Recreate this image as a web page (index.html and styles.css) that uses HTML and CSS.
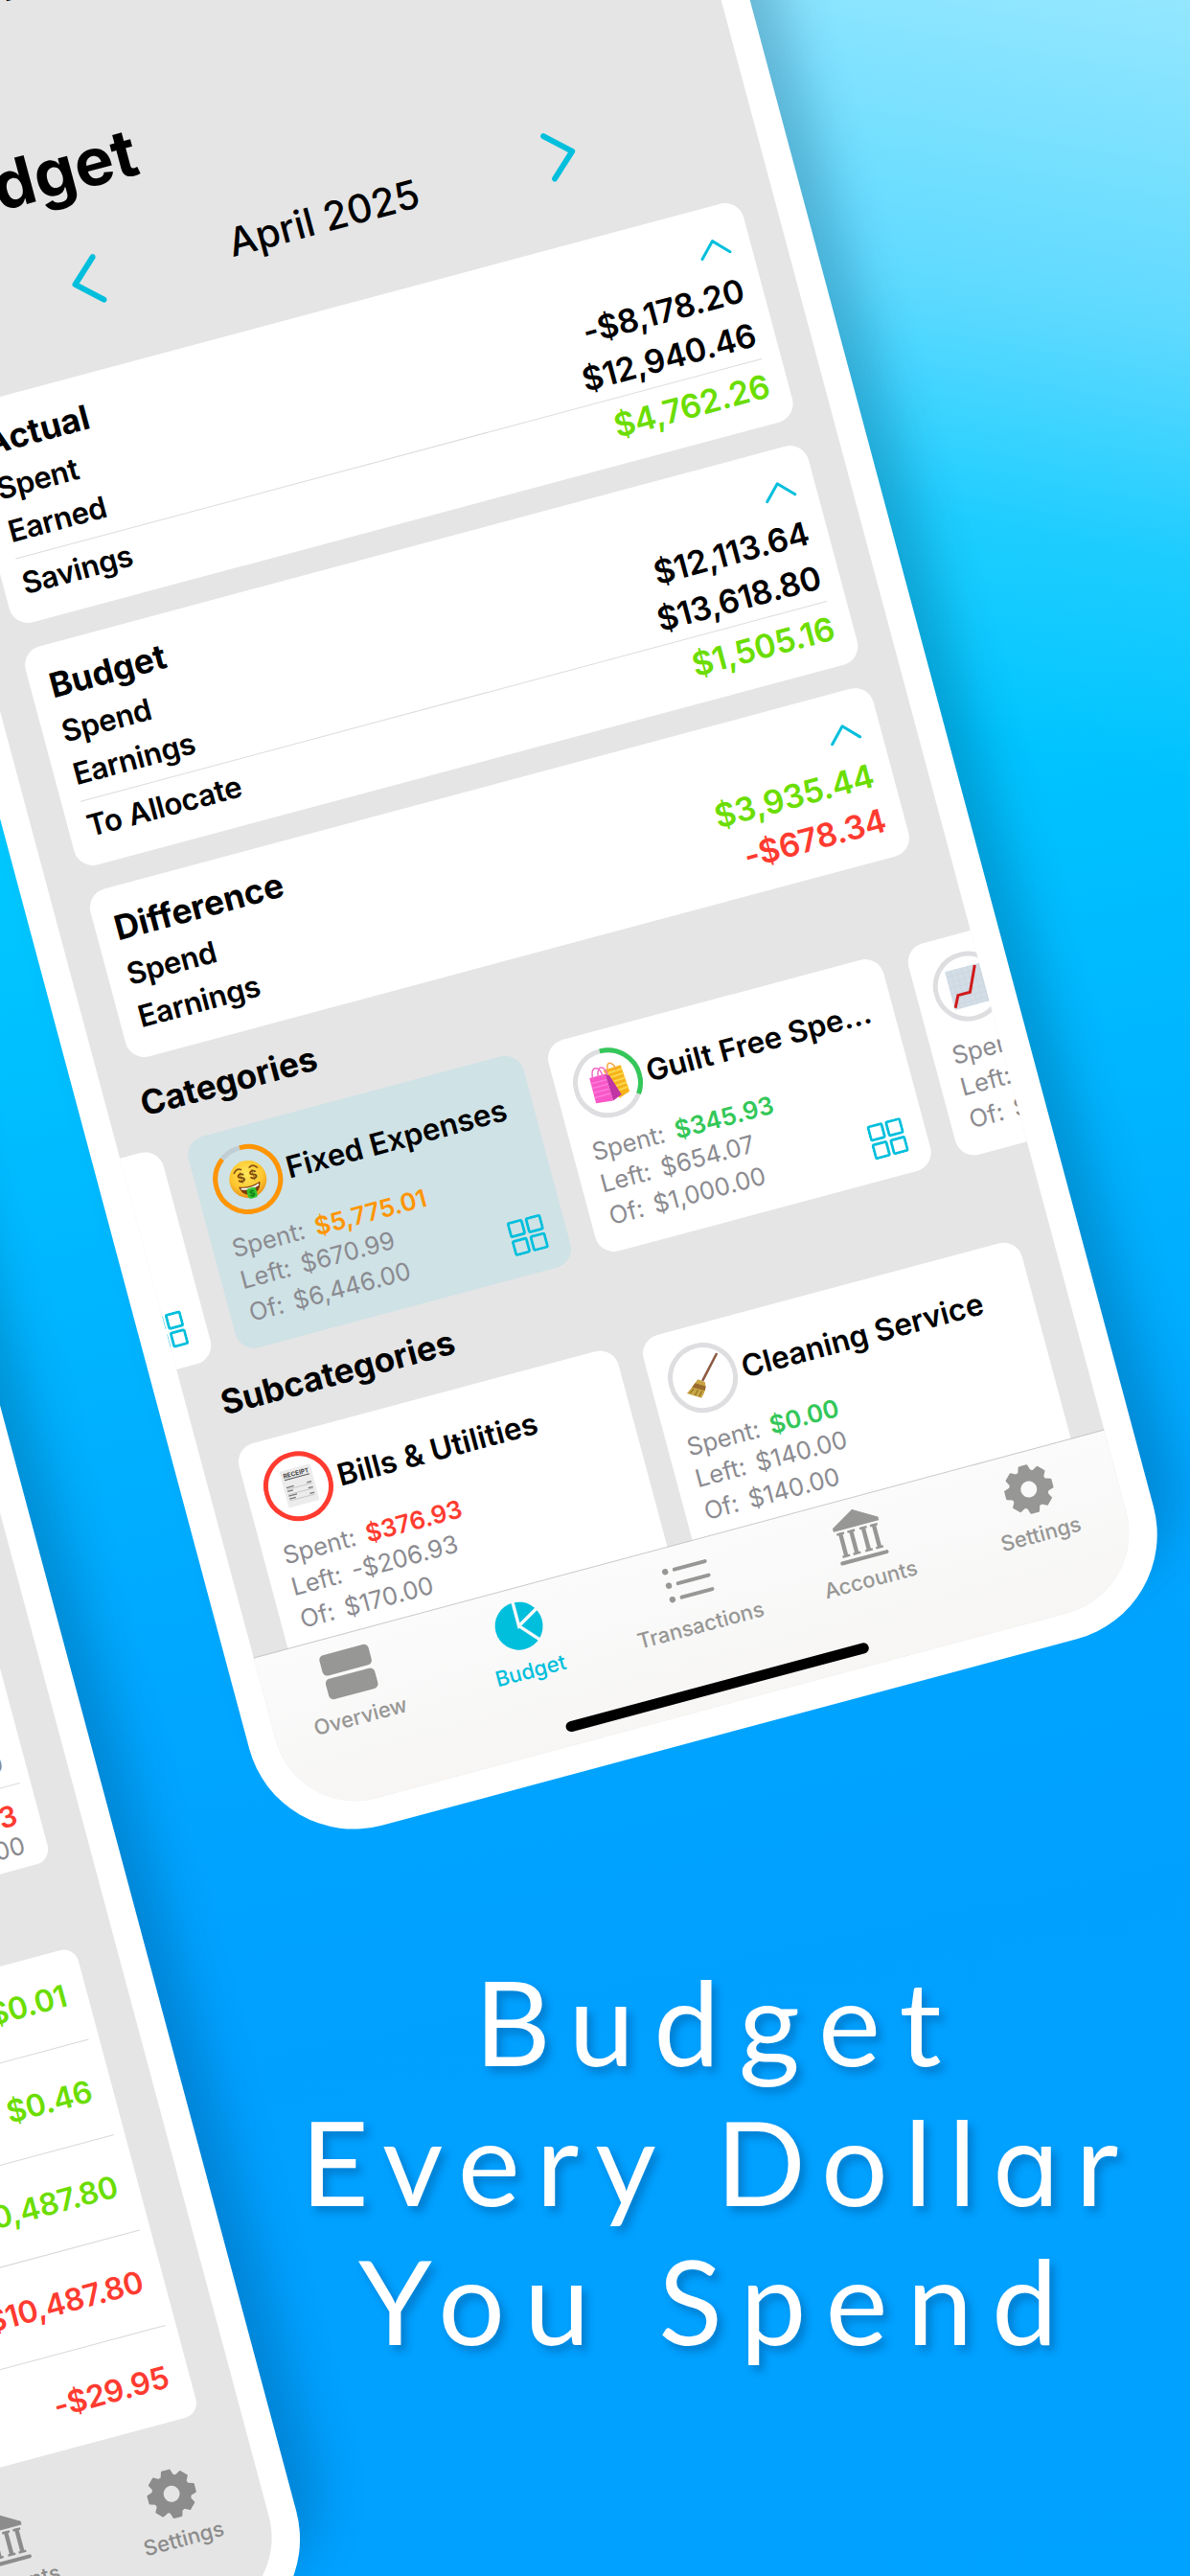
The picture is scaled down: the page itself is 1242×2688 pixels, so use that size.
FILE: index.html
```html
<!DOCTYPE html>
<html lang="en">
<head>
    <meta charset="UTF-8"/>
    <meta name="viewport" content="width=device-width, initial-scale=1.0"/>
    <title>Budget Every Dollar You Spend</title>
    <link rel="stylesheet" href="styles.css">
</head>
<body>
<!-- Shared icons -->
<svg class="icon-defs" width="0" height="0">
    <symbol id="icon-overview" viewBox="0 0 56 56">
        <rect x="1.5" y="4.5" width="53" height="22" rx="5"/>
        <rect x="1.5" y="30" width="53" height="22" rx="5"/>
    </symbol>
    <symbol id="icon-budget" viewBox="0 0 56 56">
        <circle cx="28" cy="28" r="25"/>
        <path d="M28 1V28L54 13M28 28L46 48" fill="none" stroke="#fafafa" stroke-width="3.4"/>
    </symbol>
    <symbol id="icon-list" viewBox="0 0 56 56">
        <circle cx="7" cy="13" r="3.2"/>
        <circle cx="7" cy="28" r="3.2"/>
        <circle cx="7" cy="43" r="3.2"/>
        <path d="M17 13H50M17 28H50M17 43H50" fill="none" stroke="currentColor" stroke-width="4" stroke-linecap="round"/>
    </symbol>
    <symbol id="icon-bank" viewBox="0 0 56 56">
        <path d="M28 1L52 15V18H4V15Z" stroke="currentColor" stroke-linejoin="round"/>
        <path d="M10 21V46M21.500 21V46M34.500 21V46M46 21V46" fill="none" stroke="currentColor" stroke-width="4.400"/>
        <path d="M6 22H14M17.500 22H25.500M30.500 22H38.500M42 22H50M6 46H14M17.500 46H25.500M30.500 46H38.500M42 46H50" fill="none" stroke="currentColor" stroke-width="2.400"/>
        <path d="M4 52.500H52" fill="none" stroke="currentColor" stroke-width="4" stroke-linecap="round"/>
    </symbol>
    <symbol id="icon-gear" viewBox="0 0 56 56">
        <circle cx="28" cy="28" r="14.500" fill="none" stroke="currentColor" stroke-width="12"/>
        <g stroke="currentColor" stroke-width="2" stroke-linejoin="round">
            <path id="tooth" d="M22 10L24 3.500H32L34 10ZM22 46L24 52.500H32L34 46Z"/>
            <use href="#tooth" transform="rotate(45 28 28)"/>
            <use href="#tooth" transform="rotate(90 28 28)"/>
            <use href="#tooth" transform="rotate(135 28 28)"/>
        </g>
    </symbol>
    <symbol id="icon-grid" viewBox="0 0 37 37">
        <g fill="none" stroke="currentColor" stroke-width="2.800">
            <rect x="1.500" y="1.500" width="14.500" height="14.500" rx="1.500"/>
            <rect x="21" y="1.500" width="14.500" height="14.500" rx="1.500"/>
            <rect x="1.500" y="21" width="14.500" height="14.500" rx="1.500"/>
            <rect x="21" y="21" width="14.500" height="14.500" rx="1.500"/>
        </g>
    </symbol>
    <symbol id="icon-up" viewBox="0 0 34 20">
        <path d="M2 18L17 2.500L32 18" fill="none" stroke="currentColor" stroke-width="3" stroke-linecap="round" stroke-linejoin="round"/>
    </symbol>
</svg>

<div class="scene">
    <!-- Left phone: transactions -->
    <div class="phone phone-back">
        <div class="screen">
            <div class="sheet sheet-top">
                <div class="sheet-amount muted">$140.00</div>
                <hr class="sheet-line">
                <div class="sheet-amount over">$376.93</div>
                <div class="sheet-amount muted small">of $170.00</div>
            </div>
            <div class="sheet sheet-list">
                <div class="entry plus">$0.01</div>
                <div class="entry plus">$0.46</div>
                <div class="entry plus">$10,487.80</div>
                <div class="entry minus">-$10,487.80</div>
                <div class="entry minus">-$29.95</div>
            </div>
            <nav class="tabs tabs-plain">
                <div class="tab"><svg><use href="#icon-overview"/></svg><span>Overview</span></div>
                <div class="tab"><svg><use href="#icon-budget"/></svg><span>Budget</span></div>
                <div class="tab"><svg><use href="#icon-list"/></svg><span>Transactions</span></div>
                <div class="tab"><svg><use href="#icon-bank"/></svg><span>Accounts</span></div>
                <div class="tab"><svg><use href="#icon-gear"/></svg><span>Settings</span></div>
            </nav>
        </div>
    </div>

    <!-- Right phone: budget -->
    <div class="phone phone-front">
        <div class="screen">
            <div class="status">9:41</div>
            <h1 class="page-title">Budget</h1>
            <div class="month">
                <svg class="arrow" viewBox="0 0 32 54"><path d="M29 4L4 27L29 50"/></svg>
                <span class="month-name">April 2025</span>
                <svg class="arrow" viewBox="0 0 32 54"><path d="M3 4L28 27L3 50"/></svg>
            </div>

            <div class="summary">
                <div class="summary-main">
                    <div class="labels">
                        <h2>Actual</h2>
                        <p>Spent</p>
                        <p>Earned</p>
                    </div>
                    <div class="values">
                        <svg class="chevron"><use href="#icon-up"/></svg>
                        <p>-$8,178.20</p>
                        <p>$12,940.46</p>
                    </div>
                </div>
                <div class="summary-total"><span>Savings</span><b class="plus">$4,762.26</b></div>
            </div>
            <div class="summary">
                <div class="summary-main">
                    <div class="labels">
                        <h2>Budget</h2>
                        <p>Spend</p>
                        <p>Earnings</p>
                    </div>
                    <div class="values">
                        <svg class="chevron"><use href="#icon-up"/></svg>
                        <p>$12,113.64</p>
                        <p>$13,618.80</p>
                    </div>
                </div>
                <div class="summary-total"><span>To Allocate</span><b class="plus">$1,505.16</b></div>
            </div>
            <div class="summary summary-short">
                <div class="summary-main">
                    <div class="labels">
                        <h2>Difference</h2>
                        <p>Spend</p>
                        <p>Earnings</p>
                    </div>
                    <div class="values">
                        <svg class="chevron"><use href="#icon-up"/></svg>
                        <p class="plus">$3,935.44</p>
                        <p class="minus">-$678.34</p>
                    </div>
                </div>
            </div>

            <h3 class="section-title">Categories</h3>
            <div class="carousel">
                <div class="category">
                    <svg class="grid-icon"><use href="#icon-grid"/></svg>
                </div>
                <div class="category selected">
                    <div class="category-head">
                        <svg class="ring" viewBox="0 0 73 73">
                            <circle class="track" cx="36.500" cy="36.500" r="34"/>
                            <circle class="bar orange" cx="36.500" cy="36.500" r="34" pathLength="100" stroke-dasharray="89.600 100"/>
                            <!-- money face -->
                            <defs>
                                <radialGradient id="face" cx=".5" cy=".35" r=".65">
                                    <stop offset="0" stop-color="#ffe95c"/>
                                    <stop offset=".7" stop-color="#fdc32d"/>
                                    <stop offset="1" stop-color="#e8921b"/>
                                </radialGradient>
                            </defs>
                            <circle cx="36.500" cy="36.500" r="19.500" fill="url(#face)"/>
                            <path d="M24 27Q28 22 32 25M41 25Q45 22 49 27" fill="none" stroke="#8a5310" stroke-width="1.600" stroke-linecap="round"/>
                            <path d="M25 42Q36.500 46 48 42Q46 53 36.500 53Q27 53 25 42Z" fill="#7a3c0c"/>
                            <path d="M27 43.500Q36.500 47 46 43.500V45.500Q36.500 49 27 45.500Z" fill="#fff"/>
                            <rect x="32" y="46" width="10" height="11" rx="3" fill="#35c22c"/>
                            <text class="eye" x="30" y="38">$</text>
                            <text class="eye" x="43" y="38">$</text>
                            <text class="bill" x="37" y="55">$</text>
                        </svg>
                        <h4>Fixed Expenses</h4>
                    </div>
                    <div class="lines">
                        <p>Spent: <b class="orange">$5,775.01</b></p>
                        <p>Left: $670.99</p>
                        <p>Of: $6,446.00</p>
                    </div>
                    <svg class="grid-icon"><use href="#icon-grid"/></svg>
                </div>
                <div class="category">
                    <div class="category-head">
                        <svg class="ring" viewBox="0 0 73 73">
                            <circle class="track" cx="36.500" cy="36.500" r="34"/>
                            <circle class="bar green" cx="36.500" cy="36.500" r="34" pathLength="100" stroke-dasharray="34.600 100"/>
                            <!-- shopping bags -->
                            <path d="M35 23L54 22L56 51L44 55Z" fill="#f7b21b"/>
                            <path d="M36 27L54.500 26M37 32L55 31M38 37L55 36M39 42L55.500 41M40 47L56 46" stroke="#fbd84a" stroke-width="2"/>
                            <path d="M39 27Q40 14 45 18Q48 20 48 26" fill="none" stroke="#f7a63c" stroke-width="1.500"/>
                            <path d="M19 27L36 27L37 56L19 54Z" fill="#f957c8"/>
                            <path d="M36 27L40 30L47 52L37 56Z" fill="#c034a6"/>
                            <path d="M19 33H36M19 38H36M19 43H36M19 48H36" stroke="#fd7bd8" stroke-width="1.500"/>
                            <path d="M22 30Q23 16 29 19Q33 21 33 30M28 28Q30 17 35 20Q38 22 38 29" fill="none" stroke="#f06cc6" stroke-width="1.500"/>
                        </svg>
                        <h4>Guilt Free Spe...</h4>
                    </div>
                    <div class="lines">
                        <p>Spent: <b class="green">$345.93</b></p>
                        <p>Left: $654.07</p>
                        <p>Of: $1,000.00</p>
                    </div>
                    <svg class="grid-icon"><use href="#icon-grid"/></svg>
                </div>
                <div class="category">
                    <div class="category-head">
                        <svg class="ring" viewBox="0 0 73 73">
                            <circle class="track" cx="36.500" cy="36.500" r="34"/>
                            <!-- chart -->
                            <rect x="17" y="16" width="40" height="41" fill="#d3dde6"/>
                            <path d="M17 22H57M17 28H57M17 34H57M17 40H57M17 46H57M17 52H57M23 16V57M29 16V57M35 16V57M41 16V57M47 16V57M53 16V57" stroke="#c9d4df" stroke-width=".600"/>
                            <path d="M18 55L24 43H37L49 17" fill="none" stroke="#d11a1a" stroke-width="3"/>
                        </svg>
                    </div>
                    <div class="lines">
                        <p>Spent: <b class="green">$0.00</b></p>
                        <p>Left: $500.00</p>
                        <p>Of: $500.00</p>
                    </div>
                </div>
            </div>

            <h3 class="section-title second">Subcategories</h3>
            <div class="subgrid">
                <div class="category">
                    <div class="category-head">
                        <svg class="ring" viewBox="0 0 73 73">
                            <circle class="bar red" cx="36.500" cy="36.500" r="34"/>
                            <!-- receipt -->
                            <rect x="21" y="17" width="33" height="39" fill="#ececec"/>
                            <text class="receipt" x="37.500" y="25">RECEIPT</text>
                            <path d="M24 27H51" stroke="#555" stroke-width="1"/>
                            <path d="M24 35H32M46 35H51M24 39H30M46 41H51M24 44H33M24 47H31M46 47H51" stroke="#777" stroke-width="1.300"/>
                            <path d="M24 37H51M24 42.500H51M24 49H51" stroke="#bbb" stroke-width=".700"/>
                        </svg>
                        <h4>Bills &amp; Utilities</h4>
                    </div>
                    <div class="lines">
                        <p>Spent: <b class="red">$376.93</b></p>
                        <p>Left: -$206.93</p>
                        <p>Of: $170.00</p>
                    </div>
                </div>
                <div class="category">
                    <div class="category-head">
                        <svg class="ring" viewBox="0 0 73 73">
                            <circle class="track" cx="36.500" cy="36.500" r="34"/>
                            <!-- broom -->
                            <g transform="rotate(4 36.500 36.500)">
                                <path d="M55 15L36 39" stroke="#8d5a44" stroke-width="2.600" stroke-linecap="round"/>
                                <path d="M31 37L38 41.500Q38 50 31 57L17 49.500Q24 44 31 37Z" fill="#c9a544"/>
                                <path d="M27.500 40.500L38 46L36 50L23.500 44Z" fill="#9a6a2c"/>
                                <path d="M20 50L25 46M25 53L29 48M29 55L33 50" stroke="#8a6c20" stroke-width="1"/>
                            </g>
                        </svg>
                        <h4>Cleaning Service</h4>
                    </div>
                    <div class="lines">
                        <p>Spent: <b class="green">$0.00</b></p>
                        <p>Left: $140.00</p>
                        <p>Of: $140.00</p>
                    </div>
                </div>
            </div>

            <nav class="tabs">
                <div class="tab"><svg><use href="#icon-overview"/></svg><span>Overview</span></div>
                <div class="tab active"><svg><use href="#icon-budget"/></svg><span>Budget</span></div>
                <div class="tab"><svg><use href="#icon-list"/></svg><span>Transactions</span></div>
                <div class="tab"><svg><use href="#icon-bank"/></svg><span>Accounts</span></div>
                <div class="tab"><svg><use href="#icon-gear"/></svg><span>Settings</span></div>
                <div class="home-bar"></div>
            </nav>
        </div>
    </div>

    <div class="headline">
        <p>Budget</p>
        <p class="tight">Every Doll<span class="round-a">a</span>r</p>
        <p>You Spend</p>
    </div>
</div>
</body>
</html>
```
FILE: styles.css
```css
* {
    margin: 0;
    padding: 0;
    box-sizing: border-box;
}

body {
    font-family: Inter, "Liberation Sans", sans-serif;
    color: #000;
}

.icon-defs {
    position: absolute;
}

.scene {
    position: relative;
    width: 1242px;
    height: 2688px;
    overflow: hidden;
    background:
        linear-gradient(190deg, rgba(156, 232, 255, 0.95) 0%, rgba(110, 219, 255, 0.85) 12%, rgba(60, 208, 255, 0.5) 20%, rgba(0, 198, 255, 0) 28%),
        linear-gradient(168deg, #00d2ff 15%, #00c6ff 32%, #00b4ff 48%, #00a6ff 62%, #00a0ff 75%, #00a2ff 100%);
}

/* Phones */
.phone {
    position: absolute;
    left: 0;
    top: 0;
    width: 977px;
    height: 2046px;
    padding: 29px;
    background: #fff;
    border-radius: 113px;
    transform-origin: 0 0;
    box-shadow: 34px -40px 50px -4px rgba(0, 40, 80, 0.24);
}

.phone-front {
    transform: rotate(-15deg) translate(-221px, -103px);
}

.phone-back {
    transform: rotate(-15deg) translate(-1356.5px, 678px);
}

.screen {
    position: relative;
    display: flex;
    flex-direction: column;
    width: 919px;
    height: 1988px;
    background: #e5e5e5;
    border-radius: 86px;
    overflow: hidden;
}

.status {
    height: 111px;
    padding-left: 126px;
    font-size: 40px;
    font-weight: 600;
    line-height: 125px;
}

.page-title {
    height: 219px;
    padding-left: 46px;
    font-size: 69px;
    font-weight: 700;
    line-height: 302px;
}

.month {
    display: flex;
    justify-content: space-between;
    align-items: center;
    height: 101px;
    margin-bottom: 43px;
    padding: 0 187px;
}

.month-name {
    font-size: 41px;
    font-weight: 500;
}

.arrow {
    width: 32px;
    height: 54px;
    fill: none;
    stroke: #00bfdc;
    stroke-width: 6;
    stroke-linecap: round;
    stroke-linejoin: round;
}

/* Summary cards */
.summary {
    height: 236px;
    margin: 0 36px 26px 37px;
    background: #fff;
    border-radius: 20px;
}

.summary-short {
    height: 181px;
}

.summary-main {
    display: flex;
    justify-content: space-between;
    height: 167px;
    margin: 0 20px;
}

.labels {
    padding-top: 17px;
}

.labels h2 {
    font-size: 35.5px;
    font-weight: 700;
    line-height: 53px;
}

.labels p {
    font-size: 31.3px;
    font-weight: 600;
    letter-spacing: -0.3px;
    line-height: 46px;
}

.values {
    display: flex;
    flex-direction: column;
    align-items: flex-end;
    padding-top: 33px;
    font-size: 34px;
    font-weight: 600;
    letter-spacing: -0.3px;
    line-height: 48px;
}

.chevron {
    width: 34px;
    height: 20px;
    margin: 0 1px 16px 0;
    color: #00bfdc;
}

.summary-total {
    display: flex;
    justify-content: space-between;
    margin: 0 20px;
    border-top: 1.5px solid #dcdcdc;
    font-size: 31.3px;
    font-weight: 600;
    letter-spacing: -0.3px;
    line-height: 55px;
}

.summary-total b {
    font-size: 34px;
    font-weight: 600;
}

.plus {
    color: #6bdd00;
}

.minus {
    color: #ff3b30;
}

/* Categories */
.section-title {
    margin: 0 36px;
    height: 69px;
    font-size: 35.3px;
    font-weight: 700;
    line-height: 42px;
}

.section-title.second {
    height: 95px;
    line-height: 93px;
}

.carousel {
    display: flex;
    gap: 27px;
    width: 1529px;
    margin-left: -320px;
}

.category {
    position: relative;
    width: 362px;
    height: 228px;
    padding: 18.5px 0 0 17.5px;
    background: #fff;
    border-radius: 20px;
}

.category.selected {
    background: #cfe2e6;
}

.category-head {
    display: flex;
    align-items: center;
    gap: 6px;
    margin-bottom: 13px;
    white-space: nowrap;
}

.category-head h4 {
    font-size: 31.4px;
    font-weight: 600;
}

.ring {
    width: 73px;
    height: 73px;
}

.ring .track,
.ring .bar {
    fill: none;
    stroke-width: 5;
}

.ring .track {
    stroke: #dedee1;
}

.selected .ring .track {
    stroke: #c0cdd2;
}

.ring .bar {
    transform: rotate(-90deg);
    transform-origin: 36.5px 36.5px;
}

.ring .orange { stroke: #ff9500; }
.ring .green { stroke: #34c759; }
.ring .red { stroke: #ff3b30; }

.ring text {
    text-anchor: middle;
    font-weight: 700;
    fill: #7d4a0b;
}

.ring .eye { font-size: 13px; }

.ring .bill {
    font-size: 9px;
    fill: #0d7a16;
}

.ring .receipt {
    font-size: 6.5px;
    fill: #444;
}

.lines {
    padding-left: 2.5px;
    font-size: 25.6px;
    line-height: 34.5px;
    color: #8b8b90;
    word-spacing: 4px;
}

.lines b {
    font-weight: 600;
}

.lines .orange { color: #ff9500; }
.lines .green { color: #34c759; }
.lines .red { color: #ff3b30; }

.grid-icon {
    position: absolute;
    right: 22px;
    bottom: 22px;
    width: 37px;
    height: 37px;
    color: #00bfdc;
}

.subgrid {
    display: grid;
    grid-template-columns: 1fr 1fr;
    gap: 27px;
    margin: 0 36px 0 37px;
}

.subgrid .category {
    width: auto;
    height: 300px;
    padding-left: 18px;
}

.subgrid .category-head h4 {
    font-size: 31.7px;
}

/* Tab bar */
.tabs {
    position: absolute;
    left: 0;
    right: 0;
    bottom: 0;
    display: flex;
    height: 175px;
    background: linear-gradient(#fbfbfb, #f7f6f5);
    border-top: 1.5px solid #c8c8c8;
}

.tabs-plain {
    background: none;
    border-color: transparent;
}

.tab {
    flex: 1;
    display: flex;
    flex-direction: column;
    align-items: center;
    padding-top: 11px;
    color: #979795;
    fill: #979795;
}

.tab.active {
    color: #00bfdc;
    fill: #00bfdc;
}

.tabs-plain .tab {
    color: #8c8c8c;
    fill: #8c8c8c;
}

.tab svg {
    width: 56px;
    height: 56px;
}

.tab span {
    margin-top: 3px;
    font-size: 22px;
    font-weight: 500;
    line-height: 34px;
}

.home-bar {
    position: absolute;
    left: 296px;
    bottom: 14px;
    width: 327px;
    height: 11px;
    border-radius: 6px;
    background: #000;
}

/* Transactions phone */
.sheet {
    width: 834px;
    margin-left: 43px;
    background: #fff;
    border-radius: 16px;
    text-align: right;
}

.sheet-top {
    height: 482px;
    margin-top: 700px;
    padding: 352px 23px 0 0;
}

.sheet-amount {
    font-size: 30px;
    font-weight: 600;
    line-height: 32px;
}

.sheet-amount.muted {
    font-size: 25.5px;
    font-weight: 400;
    line-height: 36px;
    color: #8b8b90;
}

.sheet-amount.small {
    line-height: 34px;
}

.sheet-amount.over {
    margin-top: 14px;
    color: #ff3b30;
}

.sheet-line {
    margin: 7px -12px 0 20px;
    border: 0;
    border-top: 1.5px solid #dcdcdc;
}

.sheet-list {
    height: 505px;
    margin-top: 93px;
    overflow: hidden;
}

.entry {
    height: 103px;
    margin: 0 11px 0 20px;
    padding-right: 11px;
    border-bottom: 1.5px solid #d8d8d8;
    font-size: 32px;
    font-weight: 600;
    letter-spacing: -0.4px;
    line-height: 103px;
}

.entry:first-child {
    margin-top: -5px;
}

.entry:last-child {
    border-bottom: 0;
}

/* Headline */
.headline {
    position: absolute;
    left: 261px;
    top: 2036px;
    width: 976px;
    font-family: Lato, "Liberation Sans", sans-serif;
    font-size: 123px;
    letter-spacing: 20px;
    line-height: 145.5px;
    text-align: center;
    color: #fff;
    text-shadow: 5px 6px 8px rgba(0, 40, 90, 0.3);
}

.headline p {
    height: 145.5px;
}

.headline .tight {
    letter-spacing: 17px;
}

/* single-storey a */
.round-a {
    font-family: Inter, "Liberation Sans", sans-serif;
    font-size: 114px;
    font-weight: 400;
    font-feature-settings: "cv11";
    line-height: 1;
}
```
